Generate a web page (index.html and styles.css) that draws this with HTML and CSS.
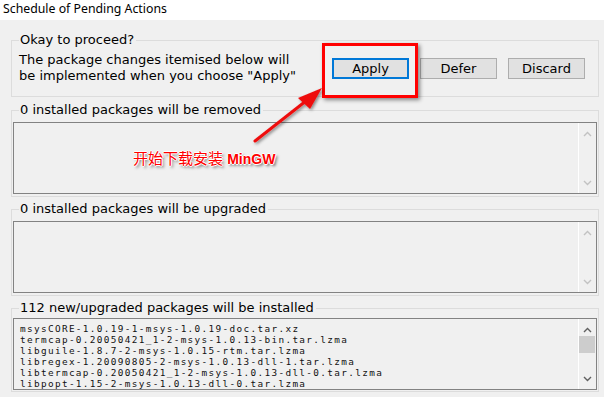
FILE: index.html
```html
<!DOCTYPE html>
<html>
<head>
<meta charset="utf-8">
<link rel="stylesheet" href="styles.css">
</head>
<body>
<div class="title">Schedule of Pending Actions</div>
<div class="content">
  <fieldset class="group g1">
    <legend>Okay to proceed?</legend>
    <div class="row">
      <p class="msg">The package changes itemised below will<br>be implemented when you choose "Apply"</p>
      <div class="buttons">
        <button class="btn focus">Apply</button>
        <button class="btn">Defer</button>
        <button class="btn">Discard</button>
      </div>
    </div>
  </fieldset>
  <fieldset class="group g2">
    <legend>0 installed packages will be removed</legend>
    <div class="list">
      <div class="items"></div>
      <div class="sb off">
        <svg class="chev" width="9" height="6" viewBox="0 0 9 6"><path d="M1 5 L4.5 1.5 L8 5"/></svg>
        <svg class="chev" width="9" height="6" viewBox="0 0 9 6"><path d="M1 1 L4.5 4.5 L8 1"/></svg>
      </div>
    </div>
  </fieldset>
  <fieldset class="group g3">
    <legend>0 installed packages will be upgraded</legend>
    <div class="list">
      <div class="items"></div>
      <div class="sb off">
        <svg class="chev" width="9" height="6" viewBox="0 0 9 6"><path d="M1 5 L4.5 1.5 L8 5"/></svg>
        <svg class="chev" width="9" height="6" viewBox="0 0 9 6"><path d="M1 1 L4.5 4.5 L8 1"/></svg>
      </div>
    </div>
  </fieldset>
  <fieldset class="group g4">
    <legend>112 new/upgraded packages will be installed</legend>
    <div class="list">
      <div class="items mono">
        <div>msysCORE-1.0.19-1-msys-1.0.19-doc.tar.xz</div>
        <div>termcap-0.20050421_1-2-msys-1.0.13-bin.tar.lzma</div>
        <div>libguile-1.8.7-2-msys-1.0.15-rtm.tar.lzma</div>
        <div>libregex-1.20090805-2-msys-1.0.13-dll-1.tar.lzma</div>
        <div>libtermcap-0.20050421_1-2-msys-1.0.13-dll-0.tar.lzma</div>
        <div>libpopt-1.15-2-msys-1.0.13-dll-0.tar.lzma</div>
      </div>
      <div class="sb on">
        <svg class="chev" width="9" height="6" viewBox="0 0 9 6"><path d="M1 5 L4.5 1.5 L8 5"/></svg>
        <div class="track"><div class="thumb"></div></div>
        <svg class="chev" width="9" height="6" viewBox="0 0 9 6"><path d="M1 1 L4.5 4.5 L8 1"/></svg>
      </div>
    </div>
  </fieldset>
</div>

<div class="callout-box"></div>
<svg class="arrow" width="100" height="80" viewBox="0 0 100 80">
  <defs>
    <filter id="sh" x="-20%" y="-20%" width="140%" height="140%">
      <feDropShadow dx="1.5" dy="1.5" stdDeviation="1.5" flood-color="#000" flood-opacity="0.45"/>
    </filter>
  </defs>
  <g filter="url(#sh)">
    <line x1="14" y1="61" x2="70" y2="17" stroke="#ee1111" stroke-width="3" stroke-linecap="round"/>
    <polygon points="81,8 57,18 69,29" fill="#ee1111"/>
  </g>
</svg>
<div class="note"><span class="cn">开始下载安装</span> <b class="en">MinGW</b></div>
</body>
</html>
```
FILE: styles.css
```css
* { box-sizing: border-box; }
body {
  margin: 0;
  width: 604px;
  height: 397px;
  overflow: hidden;
  background: #f0f0f0;
  font-family: "DejaVu Sans", sans-serif;
  font-size: 13px;
  color: #000;
  position: relative;
}
.title {
  height: 20px;
  background: #fff;
  font-family: "Noto Sans", sans-serif;
  font-size: 12.3px;
  line-height: 18px;
  padding-left: 3px;
  color: #000;
}
.content {
  padding: 12px 5px 0 11px;
  display: flex;
  flex-direction: column;
}
.group {
  margin: 0;
  padding: 0;
  border: 1px solid #dcdcdc;
  min-width: 0;
}
.group legend {
  padding: 0 2px 0 1px;
  margin-left: 7px;
  line-height: 16px;
  color: #000;
}
.g1 { padding: 4px 0 12px 7px; }
.g1 legend { margin-left: 0; }
.g2 { margin-top: 5px; }
.g3 { margin-top: 4px; }
.g4 { margin-top: 4px; }
.row {
  display: flex;
  align-items: flex-start;
}
.msg {
  margin: 0;
  line-height: 16px;
  white-space: nowrap;
}
.buttons {
  display: flex;
  gap: 11px;
  margin: 6px 13px 0 auto;
}
.btn {
  width: 77px;
  height: 21px;
  padding: 0;
  border: 1px solid #adadad;
  background: #e1e1e1;
  font-family: "DejaVu Sans", sans-serif;
  font-size: 13px;
  color: #000;
  line-height: 19px;
}
.btn.focus { border: 2px solid #0078d7; line-height: 17px; }
.list {
  height: 72px;
  margin: 4px 1px 2px;
  border: 1px solid #828282;
  display: flex;
  background: #f0f0f0;
}
.g4 .list { margin-top: 2px; margin-bottom: 1px; }
.items {
  flex: 1;
  padding: 3px 0 0 6px;
  overflow: hidden;
}
.mono {
  padding-top: 4px;
  font-family: "DejaVu Sans Mono", monospace;
  font-size: 9.4px;
  letter-spacing: 1.34px;
  line-height: 11px;
  white-space: nowrap;
  color: #111;
}
.sb {
  width: 18px;
  border-left: 1px solid #fff;
  display: flex;
  flex-direction: column;
  align-items: center;
  justify-content: space-between;
  padding: 8px 0 7px;
}
.chev path { fill: none; stroke-width: 1.4; }
.sb.off .chev path { stroke: #c2c2c2; }
.sb.on .chev path { stroke: #606060; }
.track {
  flex: 1;
  width: 100%;
  padding: 3px 1px 0 0;
}
.thumb {
  height: 17px;
  background: #cdcdcd;
}
.callout-box {
  position: absolute;
  left: 322px;
  top: 43px;
  width: 96px;
  height: 55px;
  border: 3px solid #f00;
  box-shadow: 2px 2px 4px rgba(0,0,0,0.45);
}
.arrow {
  position: absolute;
  left: 241px;
  top: 80px;
}
.note {
  position: absolute;
  left: 133px;
  top: 147px;
  white-space: nowrap;
  color: #f00;
  text-shadow: -1px 0 #fff, 1px 0 #fff, 0 -1px #fff, 0 1px #fff, 2px 2px 3px rgba(0,0,0,0.6);
}
.cn {
  font-family: "Noto Sans CJK SC", sans-serif;
  font-size: 15px;
}
.en {
  font-family: "Liberation Sans", sans-serif;
  font-size: 14px;
  font-weight: bold;
}
```
